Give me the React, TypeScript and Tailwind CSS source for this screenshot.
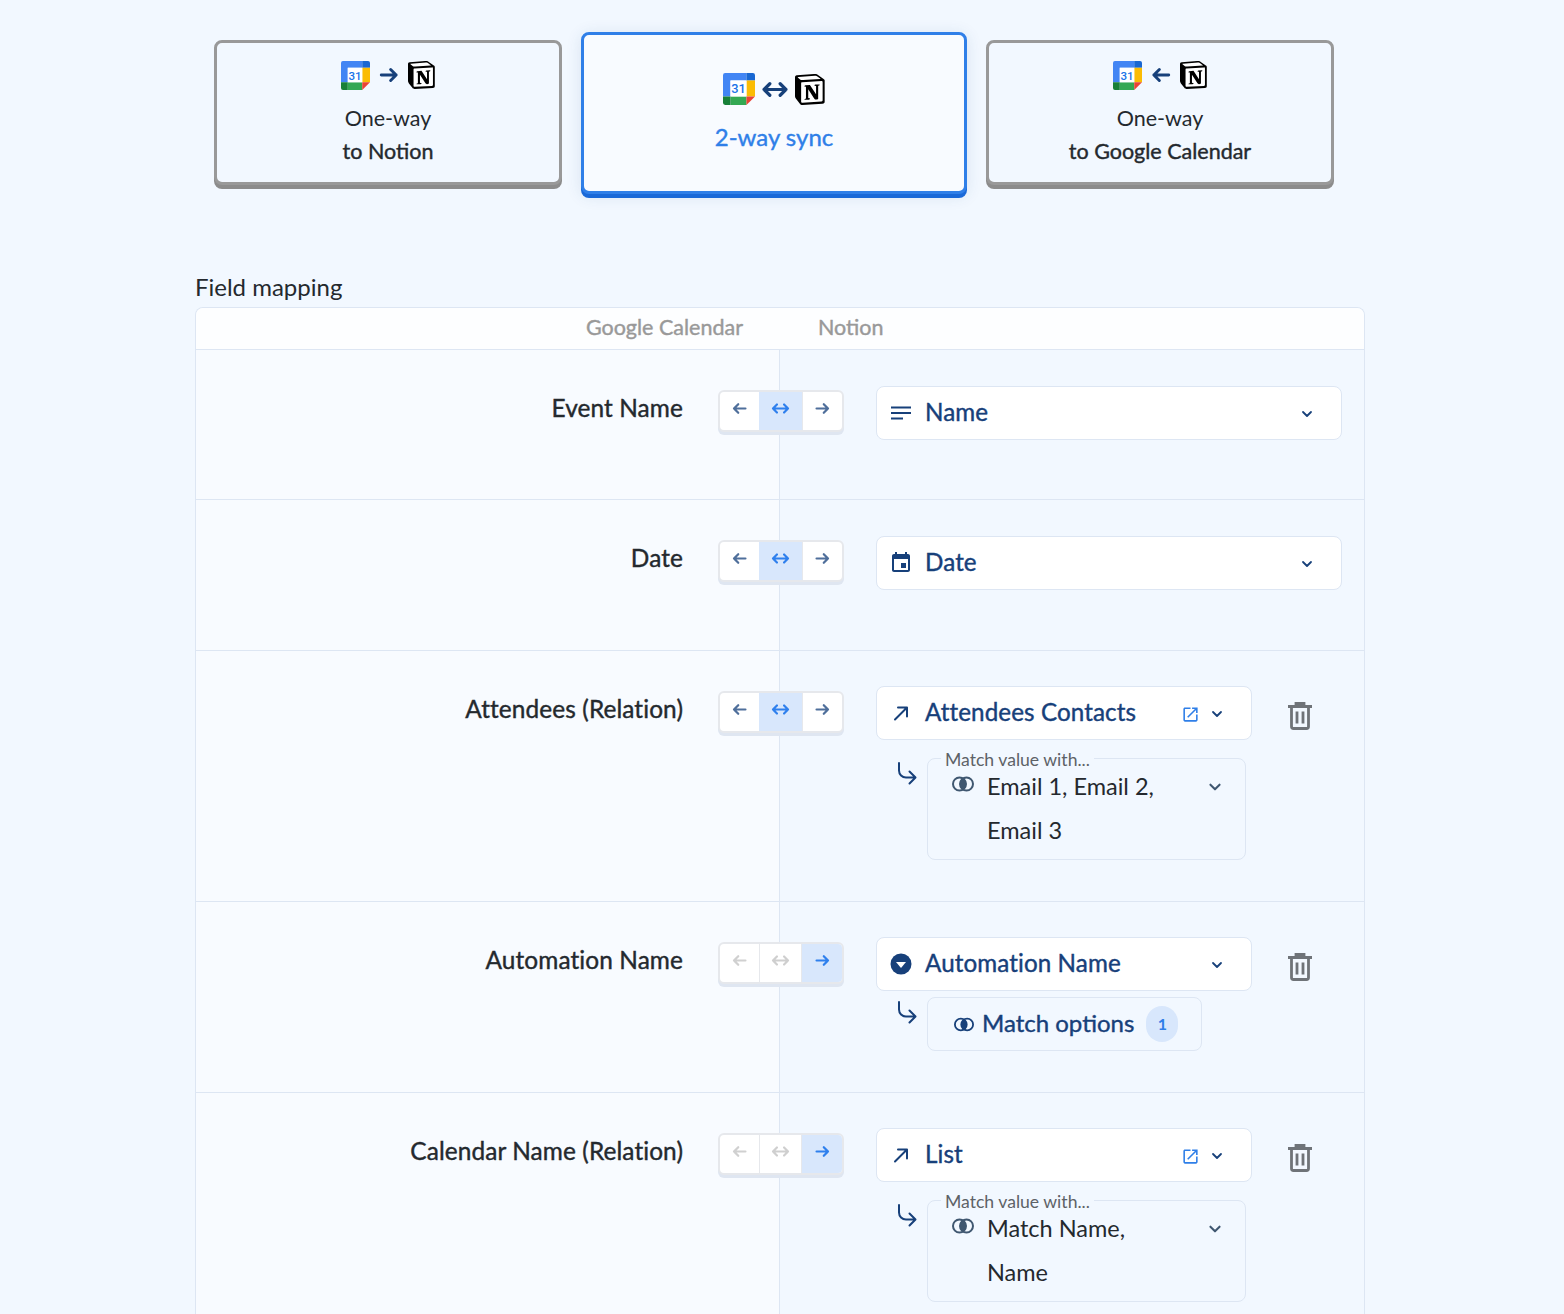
import type { ReactNode } from "react";

const notionWhite =
  "M6.017 4.313l55.333 -4.087c6.797 -0.583 8.543 -0.19 12.817 2.917l17.663 12.443c2.913 2.14 3.883 2.723 3.883 5.053v68.243c0 4.277 -1.553 6.807 -6.99 7.193L24.467 99.967c-4.08 0.193 -6.023 -0.39 -8.16 -3.113L3.3 79.94c-2.333 -3.113 -3.3 -5.443 -3.3 -8.167V11.113c0 -3.497 1.553 -6.413 6.017 -6.8z";
const notionBlack =
  "M61.35 0.227l-55.333 4.087C1.553 4.7 0 7.617 0 11.113v60.66c0 2.723 0.967 5.053 3.3 8.167l13.007 16.913c2.137 2.723 4.08 3.307 8.16 3.113l64.257 -3.89c5.433 -0.387 6.99 -2.917 6.99 -7.193V20.64c0 -2.21 -0.873 -2.847 -3.443 -4.733L74.167 3.143c-4.273 -3.107 -6.02 -3.5 -12.817 -2.917zM25.92 19.523c-5.247 0.353 -6.437 0.433 -9.417 -1.99L8.927 11.507c-0.77 -0.78 -0.383 -1.753 1.557 -1.947l53.193 -3.887c4.467 -0.39 6.793 1.167 8.54 2.527l9.123 6.61c0.39 0.197 1.36 1.36 0.193 1.36l-54.933 3.307 -0.68 0.047zM19.803 88.3V30.367c0 -2.53 0.777 -3.697 3.103 -3.893L86 22.78c2.14 -0.193 3.107 1.167 3.107 3.693v57.547c0 2.53 -0.39 4.67 -3.883 4.863l-60.377 3.5c-3.493 0.193 -5.043 -0.97 -5.043 -3.983zm59.6 -54.827c0.387 1.75 0 3.5 -1.75 3.7l-2.91 0.577v42.773c-2.527 1.36 -4.853 2.137 -6.797 2.137 -3.107 0 -3.883 -0.973 -6.21 -3.887l-19.03 -29.94v28.967l6.02 1.363s0 3.5 -4.857 3.5l-13.39 0.777c-0.39 -0.78 0 -2.723 1.357 -3.11l3.497 -0.97v-38.3L30.48 40.667c-0.39 -1.75 0.58 -4.277 3.3 -4.473l14.367 -0.967 19.8 30.327v-26.83l-5.047 -0.58c-0.39 -2.143 1.163 -3.7 3.103 -3.89l13.4 -0.78z";

function NotionLogo({ className }: { className: string }) {
  return (
    <svg className={className} viewBox="0 0 100 100">
      <path d={notionWhite} fill="#fff" />
      <path d={notionBlack} fill="#000" fillRule="evenodd" />
    </svg>
  );
}

function GoogleCal({ className }: { className: string }) {
  return (
    <svg className={className} viewBox="0 0 30 30">
      <path d="M2 0h20v7H7v15H0V2a2 2 0 0 1 2-2z" fill="#4285F4" />
      <path d="M22 0h6a2 2 0 0 1 2 2v5h-8z" fill="#1967D2" />
      <rect x="22" y="7" width="8" height="15" fill="#FBBC04" />
      <path d="M7 22h15v8H7z" fill="#34A853" />
      <path d="M0 22h7v8H2a2 2 0 0 1-2-2z" fill="#188038" />
      <path d="M22 22h8l-8 8z" fill="#EA4335" />
      <rect x="7" y="7" width="15" height="15" fill="#fff" />
      <text x="14.5" y="19.2" textAnchor="middle" fontSize="12" fontWeight="500" fill="#1a73e8" fontFamily="Roboto, sans-serif">
        31
      </text>
    </svg>
  );
}

function LeftArrow({ className, sw = 2.4 }: { className: string; sw?: number }) {
  return (
    <svg className={className} viewBox="0 0 20 20" fill="none" stroke="currentColor" strokeWidth={sw} strokeLinecap="round" strokeLinejoin="round">
      <path d="M17 10H3.5M8.5 5l-5 5 5 5" />
    </svg>
  );
}

function RightArrow({ className, sw = 2.4 }: { className: string; sw?: number }) {
  return (
    <svg className={className} viewBox="0 0 20 20" fill="none" stroke="currentColor" strokeWidth={sw} strokeLinecap="round" strokeLinejoin="round">
      <path d="M3 10h13.5M11.5 5l5 5-5 5" />
    </svg>
  );
}

function BothArrow({ className, sw = 2.4 }: { className: string; sw?: number }) {
  return (
    <svg className={className} viewBox="0 0 24 20" fill="none" stroke="currentColor" strokeWidth={sw} strokeLinecap="round" strokeLinejoin="round">
      <path d="M2.5 10h19M7.5 5l-5 5 5 5M16.5 5l5 5-5 5" />
    </svg>
  );
}

function Chevron({ className = "w-[14px] h-[14px] text-[#17407a]" }: { className?: string }) {
  return (
    <svg className={className} viewBox="0 0 14 14" fill="none" stroke="currentColor" strokeWidth="1.8" strokeLinecap="round" strokeLinejoin="round">
      <path d="M3 5l4 4 4-4" />
    </svg>
  );
}

function ListIcon() {
  return (
    <svg className="w-5 h-5 text-[#17407a]" viewBox="0 0 20 20" fill="currentColor">
      <rect y="3.5" width="20" height="2" />
      <rect y="9" width="20" height="2" />
      <rect y="14.5" width="12" height="2" />
    </svg>
  );
}

function CalIcon() {
  return (
    <svg className="w-6 h-6 -mx-0.5 text-[#17407a]" viewBox="0 0 24 24" fill="currentColor">
      <path d="M17 12h-5v5h5v-5zM16 1v2H8V1H6v2H5c-1.11 0-1.99.9-1.99 2L3 19c0 1.1.89 2 2 2h14c1.1 0 2-.9 2-2V5c0-1.1-.9-2-2-2h-1V1h-2zm3 18H5V8h14v11z" />
    </svg>
  );
}

function RelationIcon() {
  return (
    <svg className="w-5 h-5 text-[#17407a]" viewBox="0 0 20 20" fill="none" stroke="currentColor" strokeWidth="2" strokeLinecap="round" strokeLinejoin="round">
      <path d="M4 16.5L16 4.5M7 4.5h9v9" />
    </svg>
  );
}

function DropdownIcon() {
  return (
    <svg className="w-[22px] h-[22px] -mx-px" viewBox="0 0 22 22">
      <circle cx="11" cy="11" r="10.5" fill="#17407a" />
      <path d="M6 9h10l-5 6z" fill="#fff" />
    </svg>
  );
}

function OpenIcon() {
  return (
    <svg className="w-[19px] h-[19px] text-[#2f7fe8]" viewBox="0 0 24 24" fill="currentColor">
      <path d="M19 19H5V5h7V3H5c-1.11 0-2 .9-2 2v14c0 1.1.89 2 2 2h14c1.1 0 2-.9 2-2v-7h-2v7zM14 3v2h3.59l-9.83 9.83 1.41 1.41L19 6.41V10h2V3h-7z" />
    </svg>
  );
}

function Trash() {
  return (
    <svg className="w-6 h-7 text-[#6f7378]" viewBox="0 0 24 28" fill="none" stroke="currentColor" strokeWidth="2.8">
      <path d="M0 4.5h24M8 4.5V1.5h8v3" />
      <path d="M3.5 4.5v20a2 2 0 0 0 2 2h13a2 2 0 0 0 2-2v-20" />
      <path d="M9 9.5v12M15 9.5v12" />
    </svg>
  );
}

function ReturnArrow() {
  return (
    <svg className="w-5 h-6 text-[#17407a]" viewBox="0 0 20 24" fill="none" stroke="currentColor" strokeWidth="2" strokeLinecap="round" strokeLinejoin="round">
      <path d="M2 2v7.5a7 7 0 0 0 7 7h9M12.5 10.5l6 6-6 6" />
    </svg>
  );
}

function Venn({ className, fill }: { className: string; fill: string }) {
  return (
    <svg className={className} viewBox="0 0 22 16" fill="none" stroke="currentColor" strokeWidth="2">
      <circle cx="7.5" cy="8" r="6.5" />
      <circle cx="14.5" cy="8" r="6.5" />
      <path d="M11 2.6a6.5 6.5 0 0 1 0 10.8a6.5 6.5 0 0 1 0-10.8z" fill={fill} stroke="none" />
    </svg>
  );
}

function Toggle({ active }: { active: "both" | "right" }) {
  const both = active === "both";
  return (
    <div className="relative z-10 flex w-[126px] h-[42px] -mr-[65px] shrink-0 bg-white rounded-md border-2 border-[#e6e8ec] shadow-[0_3px_0_#dfe6f1] overflow-hidden">
      <div className={"w-[39px] shrink-0 flex justify-center pt-[8px] " + (both ? "text-[#4f6f9b]" : "text-[#d0d0d0]")}>
        <LeftArrow className="w-[17px] h-[17px]" sw={2.6} />
      </div>
      <div className={"w-[43px] shrink-0 flex justify-center pt-[8px] " + (both ? "bg-[#d8e7fc] text-[#2f80ed]" : "border-x border-[#e6e8ec] text-[#cfcfcf]")}>
        <BothArrow className="w-[19px] h-[17px]" sw={2.8} />
      </div>
      <div className={"flex-1 flex justify-center pt-[8px] " + (both ? "border-l border-[#e6e8ec] text-[#4f6f9b]" : "bg-[#d8e7fc] text-[#2f80ed]")}>
        <RightArrow className="w-[17px] h-[17px]" sw={2.6} />
      </div>
    </div>
  );
}

function Select({ icon, label, width, extra }: { icon: ReactNode; label: string; width: string; extra?: boolean }) {
  return (
    <div className={"h-[54px] flex items-center bg-white rounded-lg border border-[#dde6f3] pl-[14px] " + width}>
      <div className="w-[34px] flex">{icon}</div>
      <span className="flex-1 -mt-[2px] text-[24.2px] text-[#17407a] tracking-[0.1px] [-webkit-text-stroke:0.4px_#17407a]">{label}</span>
      {extra && (
        <div className="mr-[10px] mt-[3px]">
          <OpenIcon />
        </div>
      )}
      <div className="mr-[27px] mt-[2px]">
        <Chevron />
      </div>
    </div>
  );
}

function MatchBox({ lines }: { lines: string[] }) {
  return (
    <div className="flex mt-[18px]">
      <div className="w-[51px] pl-[21px] pt-[3px]">
        <ReturnArrow />
      </div>
      <div className="relative w-[319px] h-[102px] rounded-lg border border-[#dde6f3] pl-[24px] pt-[5px]">
        <span className="absolute left-[13px] -top-[9px] bg-[#f2f8ff] px-[4px] text-[17.6px] leading-[20px] text-[#5d6267]">
          Match value with...
        </span>
        <div className="flex items-start">
          <div className="w-[35px] pt-[12px]">
            <Venn className="w-[22px] h-4 text-[#3f5770]" fill="#3f5770" />
          </div>
          <div className="flex-1 text-[23.5px] leading-[44px] text-[#24292e]">
            {lines.map((l) => (
              <div key={l}>{l}</div>
            ))}
          </div>
          <div className="pt-[15px] mr-[22px]">
            <Chevron className="w-4 h-4 text-[#3f5770]" />
          </div>
        </div>
      </div>
    </div>
  );
}

function Row({ label, active, height, top, children, trash }: { label: string; active: "both" | "right"; height: string; top: string; children: ReactNode; trash?: boolean }) {
  return (
    <div className={"flex border-t border-[#dde6f3] " + height}>
      <div className="w-[584px] shrink-0 bg-[#f8fbff] border-r border-[#dde6f3] flex justify-end pt-[40px]">
        <div className="mr-[35px] text-[24.4px] leading-[40px] -mt-[2px] text-[#24292e] tracking-[0.1px] [-webkit-text-stroke:0.4px_#24292e]">{label}</div>
        <Toggle active={active} />
      </div>
      <div className={"flex-1 flex items-start pl-[96px] bg-[#f2f8ff] " + top}>
        <div>{children}</div>
        {trash && (
          <div className="ml-[36px] mt-[16px]">
            <Trash />
          </div>
        )}
      </div>
    </div>
  );
}

function ModeCard({ arrow, top, bottom }: { arrow: ReactNode; top: string; bottom: string }) {
  return (
    <div className="w-[348px] h-[145px] mt-2 rounded-lg border-[3px] border-[#999999] bg-[#f2f8ff] shadow-[0_4px_0_#8c8c8c] flex flex-col items-center pt-[17px]">
      <div className="flex items-center h-[30px] gap-[8px]">
        <GoogleCal className="w-[29px] h-[29px]" />
        {arrow}
        <NotionLogo className="w-[28px] h-[28px]" />
      </div>
      <div className="mt-[12px] text-[21.5px] leading-[33px] text-[#24292e]">{top}</div>
      <div className="text-[21.5px] leading-[33px] text-[#24292e] [-webkit-text-stroke:0.4px_#24292e]">{bottom}</div>
    </div>
  );
}

export default function App() {
  return (
    <div className="h-[1314px] overflow-hidden bg-[#f2f8ff] font-['Lato',sans-serif]">
      <div className="w-[1170px] ml-[195px] pt-8">
        {/* Sync direction */}
        <div className="flex items-start gap-[19px] pl-[19px]">
          <ModeCard arrow={<RightArrow className="w-[22px] h-[22px] text-[#17407a]" sw={2.7} />} top="One-way" bottom="to Notion" />
          <div className="w-[386px] h-[162px] rounded-lg border-[3px] border-[#2f7fe8] bg-[#f8fbff] shadow-[0_4px_0_#1a69d8,0_2px_16px_rgba(30,70,130,0.12)] flex flex-col items-center pt-[38px]">
            <div className="flex items-center gap-[6px]">
              <GoogleCal className="w-8 h-8" />
              <BothArrow className="w-[28px] h-[23px] text-[#17407a]" sw={2.8} />
              <NotionLogo className="w-[31px] h-[31px]" />
            </div>
            <div className="mt-[15px] text-[24px] leading-[34px] text-[#2f7fe8] [-webkit-text-stroke:0.4px_#2f7fe8]">2-way sync</div>
          </div>
          <ModeCard arrow={<LeftArrow className="w-[22px] h-[22px] text-[#17407a]" sw={2.7} />} top="One-way" bottom="to Google Calendar" />
        </div>

        {/* Field mapping */}
        <div className="mt-[77px] text-[24px] leading-[32px] text-[#24292e]">Field mapping</div>
        <div className="mt-[4px] rounded-t-lg border border-b-0 border-[#dde6f3] overflow-hidden">
          <div className="flex h-[41px] items-center pb-[2px] bg-[#fdfeff] text-[21.5px] text-[#999999] [-webkit-text-stroke:0.4px_#999999]">
            <div className="w-[547px] text-right">Google Calendar</div>
            <div className="ml-[75px]">Notion</div>
          </div>
          <Row label="Event Name" active="both" height="h-[150px]" top="pt-[36px]">
            <Select icon={<ListIcon />} label="Name" width="w-[466px]" />
          </Row>
          <Row label="Date" active="both" height="h-[151px]" top="pt-[36px]">
            <Select icon={<CalIcon />} label="Date" width="w-[466px]" />
          </Row>
          <Row label="Attendees (Relation)" active="both" height="h-[251px]" top="pt-[35px]" trash>
            <Select icon={<RelationIcon />} label="Attendees Contacts" width="w-[376px]" extra />
            <MatchBox lines={["Email 1, Email 2,", "Email 3"]} />
          </Row>
          <Row label="Automation Name" active="right" height="h-[191px]" top="pt-[35px]" trash>
            <Select icon={<DropdownIcon />} label="Automation Name" width="w-[376px]" />
            <div className="flex mt-[6px]">
              <div className="w-[51px] pl-[21px] pt-[3px]">
                <ReturnArrow />
              </div>
              <div className="w-[275px] h-[54px] rounded-lg border border-[#dde6f3] flex items-center pl-[26px]">
                <Venn className="w-[20px] h-[15px] text-[#17407a]" fill="#17407a" />
                <span className="ml-[8px] -mt-[2px] text-[24px] text-[#17407a] [-webkit-text-stroke:0.4px_#17407a]">Match options</span>
                <span className="ml-[12px] w-[32px] h-[36px] rounded-full bg-[#d8e7fc] text-[#2f7fe8] text-[16px] font-bold flex items-center justify-center">
                  1
                </span>
              </div>
            </div>
          </Row>
          <Row label="Calendar Name (Relation)" active="right" height="h-[260px]" top="pt-[35px]" trash>
            <Select icon={<RelationIcon />} label="List" width="w-[376px]" extra />
            <MatchBox lines={["Match Name,", "Name"]} />
          </Row>
        </div>
      </div>
    </div>
  );
}
